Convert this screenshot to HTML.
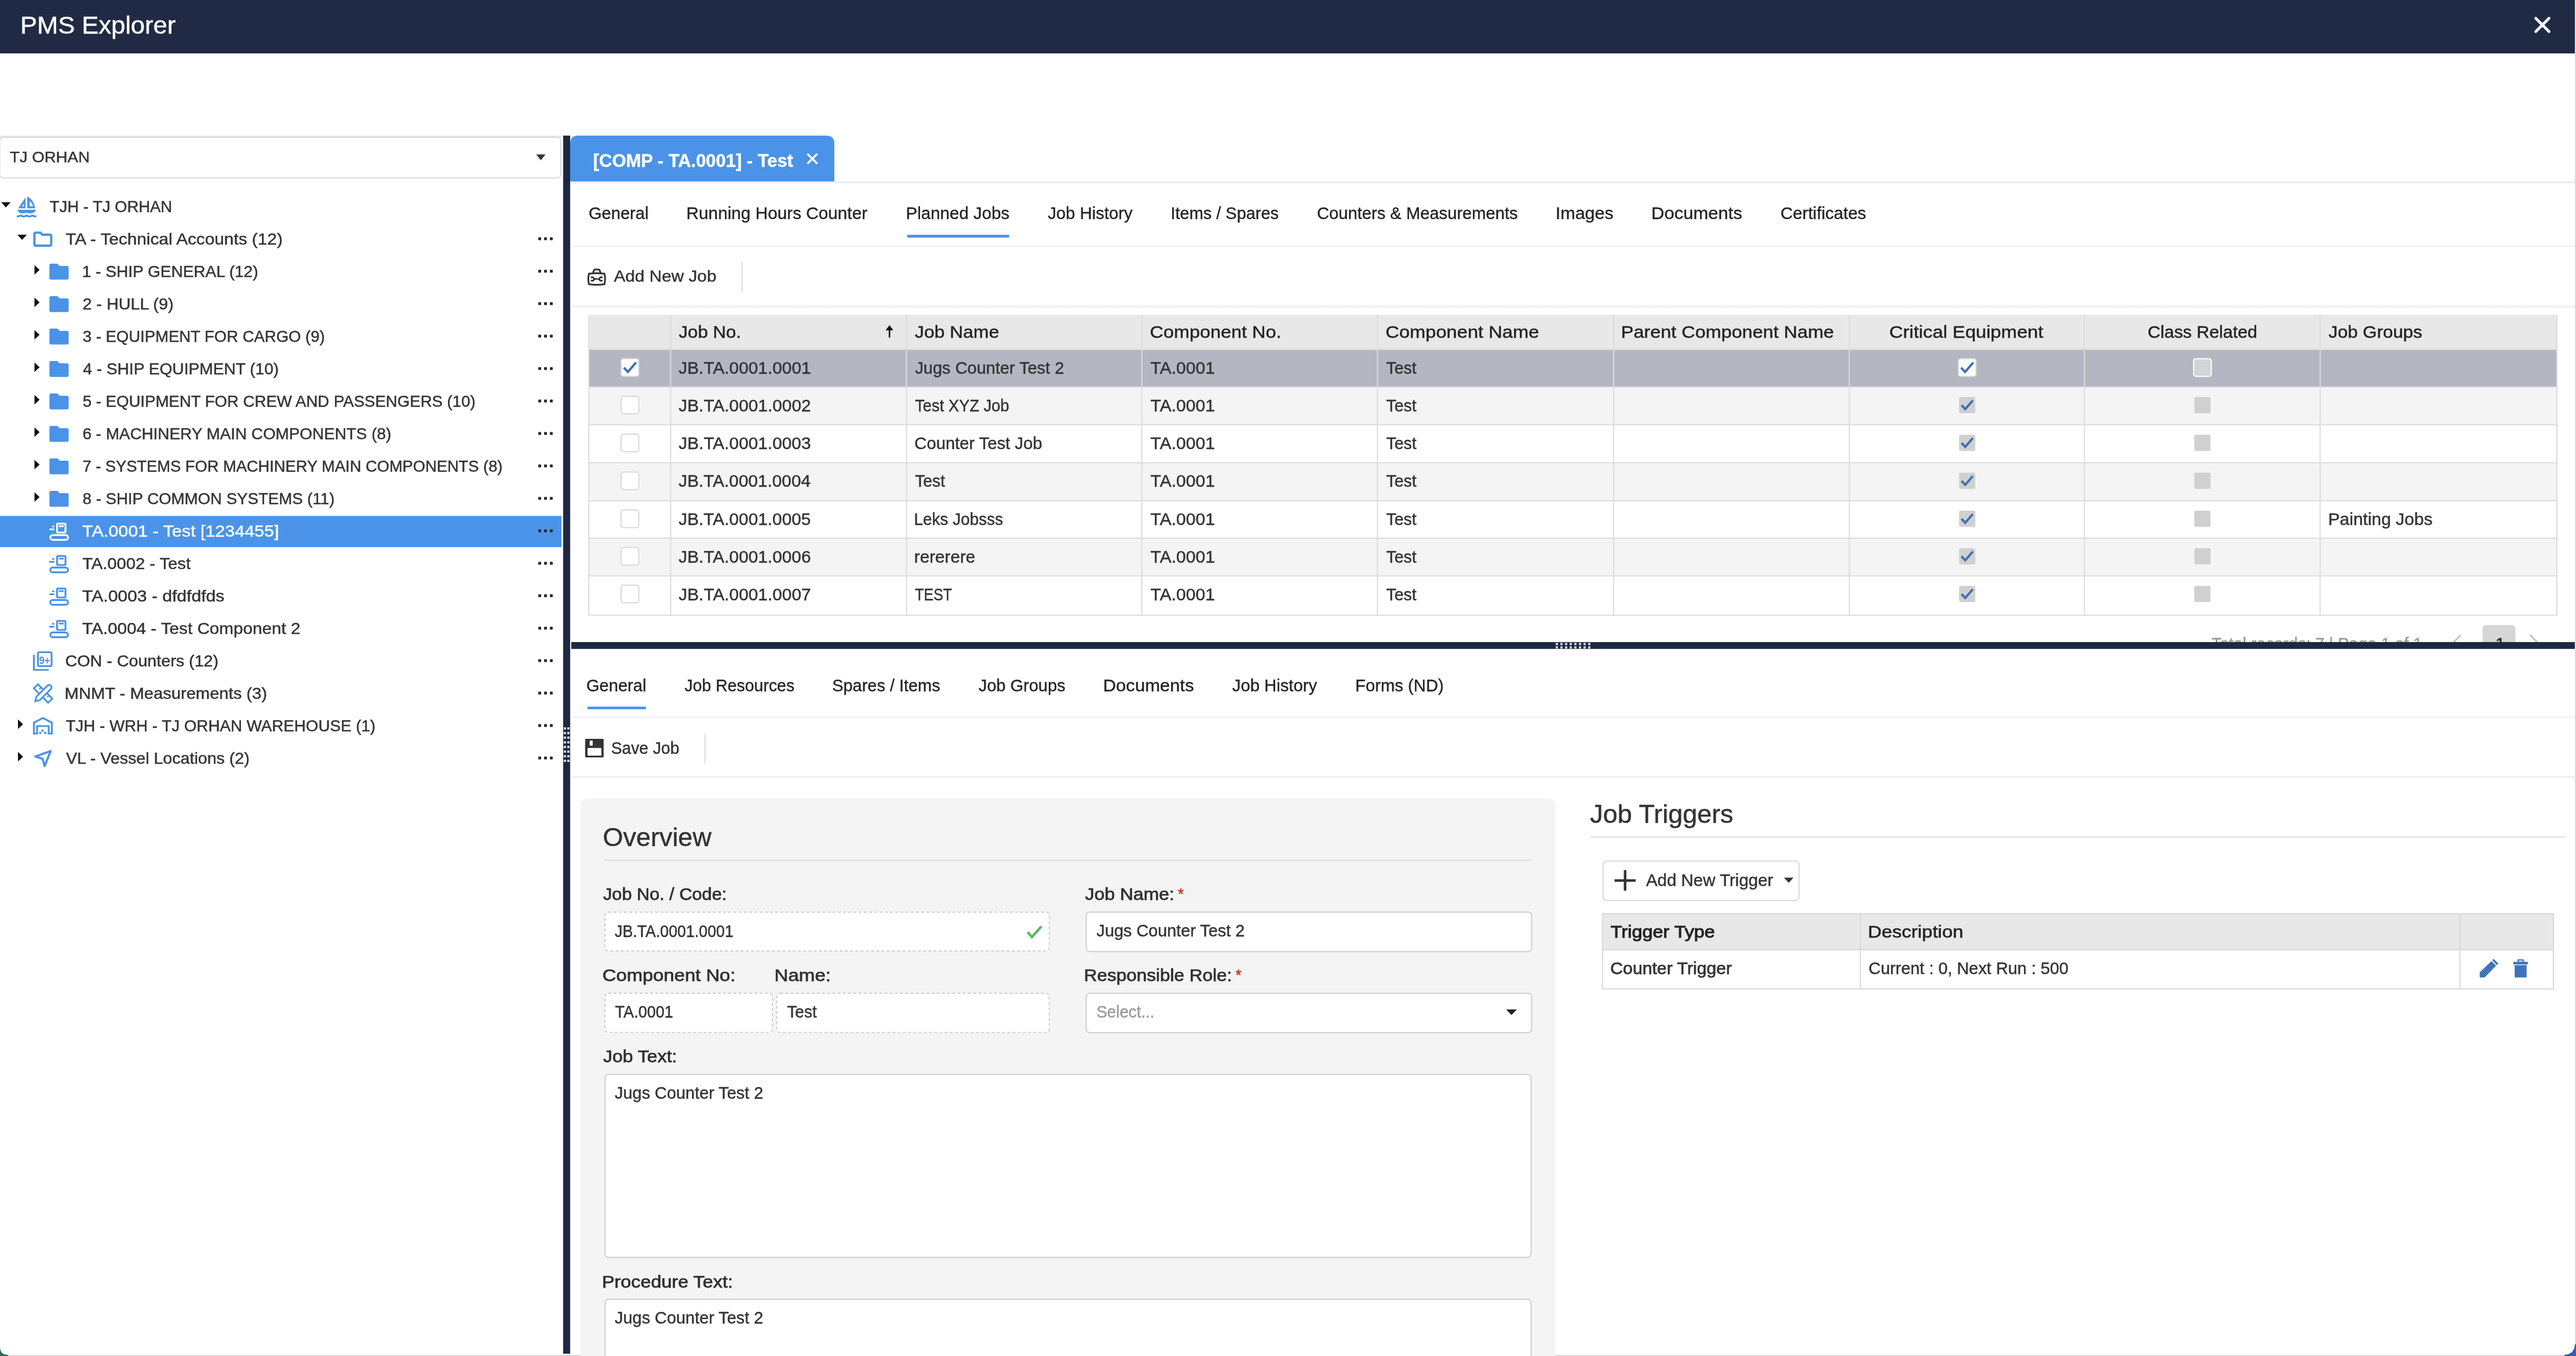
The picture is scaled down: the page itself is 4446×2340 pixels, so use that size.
<!DOCTYPE html>
<html><head><meta charset="utf-8"><title>PMS Explorer</title>
<style>
html,body{margin:0;padding:0;overflow:hidden;background:#ffffff;}
svg{display:block;will-change:transform;width:100%;height:auto;font-family:"Liberation Sans",sans-serif;}
</style></head><body>
<svg viewBox="0 0 4446 2340" preserveAspectRatio="xMinYMin meet">
<rect x="0.0" y="2300.0" width="60.0" height="40.0" fill="#2f6b4b"/>
<rect x="4386.0" y="2300.0" width="60.0" height="40.0" fill="#2d62ab"/>
<path d="M0,0 H4444 V2318 Q4444,2338 4424,2338 H14 Q0,2338 0,2324 Z" fill="#ffffff"/>
<rect x="14.0" y="2338.0" width="4412.0" height="2.0" fill="#dcdcdc"/>
<rect x="4444.0" y="0.0" width="2.0" height="2320.0" fill="#dcdcdc"/>
<rect x="0.0" y="0.0" width="4444.0" height="92.0" fill="#202a44"/>
<rect x="0.0" y="92.0" width="4444.0" height="2.0" fill="#e3e4e8"/>
<text y="58.2" font-size="43.02" fill="#ffffff" stroke="#ffffff" stroke-width="0.45" x="34.9" textLength="268.3" lengthAdjust="spacingAndGlyphs">PMS Explorer</text>
<g stroke="#ffffff" stroke-width="4.6" stroke-linecap="round">
<line x1="4376.5" y1="31.5" x2="4399.5" y2="54.5" stroke="#ffffff" stroke-width="4.6"/>
<line x1="4399.5" y1="31.5" x2="4376.5" y2="54.5" stroke="#ffffff" stroke-width="4.6"/>
</g>
<rect x="0.0" y="234.0" width="969.0" height="3.0" fill="#e6e6e6"/>
<rect x="-0.5" y="237.0" width="968.5" height="70.0" fill="#ffffff" rx="6" stroke="#dcdcdc" stroke-width="2.2"/>
<text y="280.2" font-size="26.45" fill="#333333" stroke="#333333" stroke-width="0.45" x="16.9" textLength="138.0" lengthAdjust="spacingAndGlyphs">TJ ORHAN</text>
<path d="M925.5,266.5 L941.5,266.5 L933.5,276.5 Z" fill="#333333"/>
<path d="M2,349.0 L18.3,349.0 L10.15,358.0 Z" fill="#111111"/>
<path d="M31.4,359.4 L44,340.8 V359.4 Z M37.8,356.1 L41.2,351.5 V356.1 Z" fill="#4a93e8" fill-rule="evenodd"/>
<path d="M47.1,359.4 V338.8 Q58.5,345.0 60.8,359.4 Z M51.3,356.1 V346.4 Q55.5,350.5 57.3,356.1 Z" fill="#4a93e8" fill-rule="evenodd"/>
<path d="M29.9,362.1 H62.2 Q61.2,365.5 57.7,367.0 Q51.75,369.6 45.8,367.0 Q39.7,369.6 33.6,367.0 Q30.9,365.5 29.9,362.1 Z" fill="#4a93e8"/>
<path d="M29.2,373.6 Q32.5,373.4 35.8,371.9 Q40.9,375.4 46,371.9 Q51,375.4 56,371.9 Q59.4,373.4 62.8,373.6" fill="none" stroke="#4a93e8" stroke-width="3.3"/>
<text y="366.0" font-size="27.03" fill="#333333" stroke="#333333" stroke-width="0.45" x="85.7" textLength="211.5" lengthAdjust="spacingAndGlyphs">TJH - TJ ORHAN</text>
<path d="M30,405.0 L46.3,405.0 L38.15,414.0 Z" fill="#111111"/>
<path d="M59.4,404.0 Q59.4,401.6 61.8,401.6 H70 L73,405.0 H86 Q88.4,405.0 88.4,407.4 V421.6 Q88.4,424.0 86,424.0 H61.8 Q59.4,424.0 59.4,421.6 Z" fill="none" stroke="#4a93e8" stroke-width="4.0"/>
<text y="422.0" font-size="27.03" fill="#333333" stroke="#333333" stroke-width="0.45" x="113.3" textLength="374.5" lengthAdjust="spacingAndGlyphs">TA - Technical Accounts (12)</text>
<rect x="929.0" y="409.6" width="5.0" height="4.8" fill="#2a2a2a" rx="1"/>
<rect x="939.0" y="409.6" width="5.0" height="4.8" fill="#2a2a2a" rx="1"/>
<rect x="949.0" y="409.6" width="5.0" height="4.8" fill="#2a2a2a" rx="1"/>
<path d="M59.5,457.5 L68.3,465.8 L59.5,474.0 Z" fill="#111111"/>
<path d="M85.3,458.0 Q85.3,455.0 88.3,455.0 H99 L103,459.0 H115.5 Q118.5,459.0 118.5,462.0 V479.5 Q118.5,482.5 115.5,482.5 H88.3 Q85.3,482.5 85.3,479.5 Z" fill="#4a93e8"/>
<text y="478.0" font-size="27.03" fill="#333333" stroke="#333333" stroke-width="0.45" x="141.7" textLength="303.8" lengthAdjust="spacingAndGlyphs">1 - SHIP GENERAL (12)</text>
<rect x="929.0" y="465.6" width="5.0" height="4.8" fill="#2a2a2a" rx="1"/>
<rect x="939.0" y="465.6" width="5.0" height="4.8" fill="#2a2a2a" rx="1"/>
<rect x="949.0" y="465.6" width="5.0" height="4.8" fill="#2a2a2a" rx="1"/>
<path d="M59.5,513.5 L68.3,521.8 L59.5,530.0 Z" fill="#111111"/>
<path d="M85.3,514.0 Q85.3,511.0 88.3,511.0 H99 L103,515.0 H115.5 Q118.5,515.0 118.5,518.0 V535.5 Q118.5,538.5 115.5,538.5 H88.3 Q85.3,538.5 85.3,535.5 Z" fill="#4a93e8"/>
<text y="534.0" font-size="27.03" fill="#333333" stroke="#333333" stroke-width="0.45" x="142.4" textLength="157.1" lengthAdjust="spacingAndGlyphs">2 - HULL (9)</text>
<rect x="929.0" y="521.6" width="5.0" height="4.8" fill="#2a2a2a" rx="1"/>
<rect x="939.0" y="521.6" width="5.0" height="4.8" fill="#2a2a2a" rx="1"/>
<rect x="949.0" y="521.6" width="5.0" height="4.8" fill="#2a2a2a" rx="1"/>
<path d="M59.5,569.5 L68.3,577.8 L59.5,586.0 Z" fill="#111111"/>
<path d="M85.3,570.0 Q85.3,567.0 88.3,567.0 H99 L103,571.0 H115.5 Q118.5,571.0 118.5,574.0 V591.5 Q118.5,594.5 115.5,594.5 H88.3 Q85.3,594.5 85.3,591.5 Z" fill="#4a93e8"/>
<text y="590.0" font-size="27.03" fill="#333333" stroke="#333333" stroke-width="0.45" x="142.8" textLength="417.9" lengthAdjust="spacingAndGlyphs">3 - EQUIPMENT FOR CARGO (9)</text>
<rect x="929.0" y="577.6" width="5.0" height="4.8" fill="#2a2a2a" rx="1"/>
<rect x="939.0" y="577.6" width="5.0" height="4.8" fill="#2a2a2a" rx="1"/>
<rect x="949.0" y="577.6" width="5.0" height="4.8" fill="#2a2a2a" rx="1"/>
<path d="M59.5,625.5 L68.3,633.8 L59.5,642.0 Z" fill="#111111"/>
<path d="M85.3,626.0 Q85.3,623.0 88.3,623.0 H99 L103,627.0 H115.5 Q118.5,627.0 118.5,630.0 V647.5 Q118.5,650.5 115.5,650.5 H88.3 Q85.3,650.5 85.3,647.5 Z" fill="#4a93e8"/>
<text y="646.0" font-size="27.03" fill="#333333" stroke="#333333" stroke-width="0.45" x="143.2" textLength="338.0" lengthAdjust="spacingAndGlyphs">4 - SHIP EQUIPMENT (10)</text>
<rect x="929.0" y="633.6" width="5.0" height="4.8" fill="#2a2a2a" rx="1"/>
<rect x="939.0" y="633.6" width="5.0" height="4.8" fill="#2a2a2a" rx="1"/>
<rect x="949.0" y="633.6" width="5.0" height="4.8" fill="#2a2a2a" rx="1"/>
<path d="M59.5,681.5 L68.3,689.8 L59.5,698.0 Z" fill="#111111"/>
<path d="M85.3,682.0 Q85.3,679.0 88.3,679.0 H99 L103,683.0 H115.5 Q118.5,683.0 118.5,686.0 V703.5 Q118.5,706.5 115.5,706.5 H88.3 Q85.3,706.5 85.3,703.5 Z" fill="#4a93e8"/>
<text y="702.0" font-size="27.03" fill="#333333" stroke="#333333" stroke-width="0.45" x="142.7" textLength="678.0" lengthAdjust="spacingAndGlyphs">5 - EQUIPMENT FOR CREW AND PASSENGERS (10)</text>
<rect x="929.0" y="689.6" width="5.0" height="4.8" fill="#2a2a2a" rx="1"/>
<rect x="939.0" y="689.6" width="5.0" height="4.8" fill="#2a2a2a" rx="1"/>
<rect x="949.0" y="689.6" width="5.0" height="4.8" fill="#2a2a2a" rx="1"/>
<path d="M59.5,737.5 L68.3,745.8 L59.5,754.0 Z" fill="#111111"/>
<path d="M85.3,738.0 Q85.3,735.0 88.3,735.0 H99 L103,739.0 H115.5 Q118.5,739.0 118.5,742.0 V759.5 Q118.5,762.5 115.5,762.5 H88.3 Q85.3,762.5 85.3,759.5 Z" fill="#4a93e8"/>
<text y="758.0" font-size="27.03" fill="#333333" stroke="#333333" stroke-width="0.45" x="142.4" textLength="532.8" lengthAdjust="spacingAndGlyphs">6 - MACHINERY MAIN COMPONENTS (8)</text>
<rect x="929.0" y="745.6" width="5.0" height="4.8" fill="#2a2a2a" rx="1"/>
<rect x="939.0" y="745.6" width="5.0" height="4.8" fill="#2a2a2a" rx="1"/>
<rect x="949.0" y="745.6" width="5.0" height="4.8" fill="#2a2a2a" rx="1"/>
<path d="M59.5,793.5 L68.3,801.8 L59.5,810.0 Z" fill="#111111"/>
<path d="M85.3,794.0 Q85.3,791.0 88.3,791.0 H99 L103,795.0 H115.5 Q118.5,795.0 118.5,798.0 V815.5 Q118.5,818.5 115.5,818.5 H88.3 Q85.3,818.5 85.3,815.5 Z" fill="#4a93e8"/>
<text y="814.0" font-size="27.03" fill="#333333" stroke="#333333" stroke-width="0.45" x="142.4" textLength="725.0" lengthAdjust="spacingAndGlyphs">7 - SYSTEMS FOR MACHINERY MAIN COMPONENTS (8)</text>
<rect x="929.0" y="801.6" width="5.0" height="4.8" fill="#2a2a2a" rx="1"/>
<rect x="939.0" y="801.6" width="5.0" height="4.8" fill="#2a2a2a" rx="1"/>
<rect x="949.0" y="801.6" width="5.0" height="4.8" fill="#2a2a2a" rx="1"/>
<path d="M59.5,849.5 L68.3,857.8 L59.5,866.0 Z" fill="#111111"/>
<path d="M85.3,850.0 Q85.3,847.0 88.3,847.0 H99 L103,851.0 H115.5 Q118.5,851.0 118.5,854.0 V871.5 Q118.5,874.5 115.5,874.5 H88.3 Q85.3,874.5 85.3,871.5 Z" fill="#4a93e8"/>
<text y="870.0" font-size="27.03" fill="#333333" stroke="#333333" stroke-width="0.45" x="142.6" textLength="434.8" lengthAdjust="spacingAndGlyphs">8 - SHIP COMMON SYSTEMS (11)</text>
<rect x="929.0" y="857.6" width="5.0" height="4.8" fill="#2a2a2a" rx="1"/>
<rect x="939.0" y="857.6" width="5.0" height="4.8" fill="#2a2a2a" rx="1"/>
<rect x="949.0" y="857.6" width="5.0" height="4.8" fill="#2a2a2a" rx="1"/>
<rect x="0.0" y="890.4" width="969.0" height="53.8" fill="#4a93e8"/>
<rect x="98.5" y="903.5" width="14.5" height="15.5" fill="none" rx="1.5" stroke="#ffffff" stroke-width="3.2"/>
<rect x="101.5" y="906.5" width="8.5" height="3.0" fill="#ffffff"/>
<rect x="90.0" y="907.0" width="3.5" height="3.0" fill="#ffffff"/>
<rect x="85.3" y="912.0" width="8.3" height="3.0" fill="#ffffff"/>
<rect x="86.8" y="923.3" width="30.6" height="8.3" fill="none" rx="4.15" stroke="#ffffff" stroke-width="3.2"/>
<text y="926.0" font-size="27.03" fill="#ffffff" stroke="#ffffff" stroke-width="0.45" x="142.1" textLength="339.4" lengthAdjust="spacingAndGlyphs">TA.0001 - Test [1234455]</text>
<rect x="929.0" y="913.6" width="5.0" height="4.8" fill="#2a2a2a" rx="1"/>
<rect x="939.0" y="913.6" width="5.0" height="4.8" fill="#2a2a2a" rx="1"/>
<rect x="949.0" y="913.6" width="5.0" height="4.8" fill="#2a2a2a" rx="1"/>
<rect x="98.5" y="959.5" width="14.5" height="15.5" fill="none" rx="1.5" stroke="#4a93e8" stroke-width="3.2"/>
<rect x="101.5" y="962.5" width="8.5" height="3.0" fill="#4a93e8"/>
<rect x="90.0" y="963.0" width="3.5" height="3.0" fill="#4a93e8"/>
<rect x="85.3" y="968.0" width="8.3" height="3.0" fill="#4a93e8"/>
<rect x="86.8" y="979.3" width="30.6" height="8.3" fill="none" rx="4.15" stroke="#4a93e8" stroke-width="3.2"/>
<text y="982.0" font-size="27.03" fill="#333333" stroke="#333333" stroke-width="0.45" x="142.2" textLength="186.8" lengthAdjust="spacingAndGlyphs">TA.0002 - Test</text>
<rect x="929.0" y="969.6" width="5.0" height="4.8" fill="#2a2a2a" rx="1"/>
<rect x="939.0" y="969.6" width="5.0" height="4.8" fill="#2a2a2a" rx="1"/>
<rect x="949.0" y="969.6" width="5.0" height="4.8" fill="#2a2a2a" rx="1"/>
<rect x="98.5" y="1015.5" width="14.5" height="15.5" fill="none" rx="1.5" stroke="#4a93e8" stroke-width="3.2"/>
<rect x="101.5" y="1018.5" width="8.5" height="3.0" fill="#4a93e8"/>
<rect x="90.0" y="1019.0" width="3.5" height="3.0" fill="#4a93e8"/>
<rect x="85.3" y="1024.0" width="8.3" height="3.0" fill="#4a93e8"/>
<rect x="86.8" y="1035.3" width="30.6" height="8.3" fill="none" rx="4.15" stroke="#4a93e8" stroke-width="3.2"/>
<text y="1038.0" font-size="27.03" fill="#333333" stroke="#333333" stroke-width="0.45" x="142.1" textLength="245.2" lengthAdjust="spacingAndGlyphs">TA.0003 - dfdfdfds</text>
<rect x="929.0" y="1025.6" width="5.0" height="4.8" fill="#2a2a2a" rx="1"/>
<rect x="939.0" y="1025.6" width="5.0" height="4.8" fill="#2a2a2a" rx="1"/>
<rect x="949.0" y="1025.6" width="5.0" height="4.8" fill="#2a2a2a" rx="1"/>
<rect x="98.5" y="1071.5" width="14.5" height="15.5" fill="none" rx="1.5" stroke="#4a93e8" stroke-width="3.2"/>
<rect x="101.5" y="1074.5" width="8.5" height="3.0" fill="#4a93e8"/>
<rect x="90.0" y="1075.0" width="3.5" height="3.0" fill="#4a93e8"/>
<rect x="85.3" y="1080.0" width="8.3" height="3.0" fill="#4a93e8"/>
<rect x="86.8" y="1091.3" width="30.6" height="8.3" fill="none" rx="4.15" stroke="#4a93e8" stroke-width="3.2"/>
<text y="1094.0" font-size="27.03" fill="#333333" stroke="#333333" stroke-width="0.45" x="142.1" textLength="376.3" lengthAdjust="spacingAndGlyphs">TA.0004 - Test Component 2</text>
<rect x="929.0" y="1081.6" width="5.0" height="4.8" fill="#2a2a2a" rx="1"/>
<rect x="939.0" y="1081.6" width="5.0" height="4.8" fill="#2a2a2a" rx="1"/>
<rect x="949.0" y="1081.6" width="5.0" height="4.8" fill="#2a2a2a" rx="1"/>
<path d="M58.5,1130.0 V1156.0 H84" fill="none" stroke="#4a93e8" stroke-width="3.2"/>
<rect x="65.5" y="1125.5" width="23.5" height="24.0" fill="none" rx="2.5" stroke="#4a93e8" stroke-width="3.2"/>
<text x="67.5" y="1145.5" font-size="17.5" font-weight="700" fill="#4a93e8" textLength="19" lengthAdjust="spacingAndGlyphs">9+</text>
<text y="1150.0" font-size="27.03" fill="#333333" stroke="#333333" stroke-width="0.45" x="112.5" textLength="264.6" lengthAdjust="spacingAndGlyphs">CON - Counters (12)</text>
<rect x="929.0" y="1137.6" width="5.0" height="4.8" fill="#2a2a2a" rx="1"/>
<rect x="939.0" y="1137.6" width="5.0" height="4.8" fill="#2a2a2a" rx="1"/>
<rect x="949.0" y="1137.6" width="5.0" height="4.8" fill="#2a2a2a" rx="1"/>
<g transform="translate(74.3,1196.7) rotate(45)">
<rect x="-17.5" y="-5.0" width="35.0" height="10.0" fill="none" stroke="#4a93e8" stroke-width="3.0"/>
<rect x="-11.0" y="-5.0" width="2.5" height="4.5" fill="#4a93e8"/>
<rect x="8.5" y="-5.0" width="2.5" height="4.5" fill="#4a93e8"/>
</g>
<g transform="translate(74.3,1196.7) rotate(-45)">
<path d="M-19,0 L-12,-4.2 H14 Q19,-4.2 19,0 Q19,4.2 14,4.2 H-12 Z" fill="#ffffff" stroke="#4a93e8" stroke-width="3.0"/>
</g>
<text y="1206.0" font-size="27.03" fill="#333333" stroke="#333333" stroke-width="0.45" x="111.6" textLength="349.4" lengthAdjust="spacingAndGlyphs">MNMT - Measurements (3)</text>
<rect x="929.0" y="1193.6" width="5.0" height="4.8" fill="#2a2a2a" rx="1"/>
<rect x="939.0" y="1193.6" width="5.0" height="4.8" fill="#2a2a2a" rx="1"/>
<rect x="949.0" y="1193.6" width="5.0" height="4.8" fill="#2a2a2a" rx="1"/>
<path d="M31,1241.5 L39.8,1249.8 L31,1258.0 Z" fill="#111111"/>
<path d="M58.5,1266.0 V1247.0 L74,1239.0 L89.5,1247.0 V1266.0 H84 V1253.0 H64 V1266.0 Z" fill="none" stroke="#4a93e8" stroke-width="3.2" stroke-linejoin="miter"/>
<rect x="71.5" y="1259.0" width="4.0" height="3.5" fill="#4a93e8"/>
<rect x="67.5" y="1263.0" width="4.0" height="3.5" fill="#4a93e8"/>
<rect x="76.0" y="1263.0" width="4.0" height="3.5" fill="#4a93e8"/>
<text y="1262.0" font-size="27.03" fill="#333333" stroke="#333333" stroke-width="0.45" x="113.4" textLength="534.7" lengthAdjust="spacingAndGlyphs">TJH - WRH - TJ ORHAN WAREHOUSE (1)</text>
<rect x="929.0" y="1249.6" width="5.0" height="4.8" fill="#2a2a2a" rx="1"/>
<rect x="939.0" y="1249.6" width="5.0" height="4.8" fill="#2a2a2a" rx="1"/>
<rect x="949.0" y="1249.6" width="5.0" height="4.8" fill="#2a2a2a" rx="1"/>
<path d="M31,1297.5 L39.8,1305.8 L31,1314.0 Z" fill="#111111"/>
<path d="M61,1305.5 L87.5,1296.0 L77,1322.0 L73.5,1309.5 Z" fill="none" stroke="#4a93e8" stroke-width="3.6" stroke-linejoin="round"/>
<text y="1318.0" font-size="27.03" fill="#333333" stroke="#333333" stroke-width="0.45" x="113.9" textLength="316.9" lengthAdjust="spacingAndGlyphs">VL - Vessel Locations (2)</text>
<rect x="929.0" y="1305.6" width="5.0" height="4.8" fill="#2a2a2a" rx="1"/>
<rect x="939.0" y="1305.6" width="5.0" height="4.8" fill="#2a2a2a" rx="1"/>
<rect x="949.0" y="1305.6" width="5.0" height="4.8" fill="#2a2a2a" rx="1"/>
<rect x="972.0" y="234.0" width="12.0" height="2102.0" fill="#1f2843"/>
<rect x="973.0" y="1255.0" width="4.0" height="4.0" fill="#ccd1dd"/>
<rect x="979.0" y="1255.0" width="4.0" height="4.0" fill="#ccd1dd"/>
<rect x="973.0" y="1263.0" width="4.0" height="4.0" fill="#ccd1dd"/>
<rect x="979.0" y="1263.0" width="4.0" height="4.0" fill="#ccd1dd"/>
<rect x="973.0" y="1271.0" width="4.0" height="4.0" fill="#ccd1dd"/>
<rect x="979.0" y="1271.0" width="4.0" height="4.0" fill="#ccd1dd"/>
<rect x="973.0" y="1279.0" width="4.0" height="4.0" fill="#ccd1dd"/>
<rect x="979.0" y="1279.0" width="4.0" height="4.0" fill="#ccd1dd"/>
<rect x="973.0" y="1287.0" width="4.0" height="4.0" fill="#ccd1dd"/>
<rect x="979.0" y="1287.0" width="4.0" height="4.0" fill="#ccd1dd"/>
<rect x="973.0" y="1295.0" width="4.0" height="4.0" fill="#ccd1dd"/>
<rect x="979.0" y="1295.0" width="4.0" height="4.0" fill="#ccd1dd"/>
<rect x="973.0" y="1303.0" width="4.0" height="4.0" fill="#ccd1dd"/>
<rect x="979.0" y="1303.0" width="4.0" height="4.0" fill="#ccd1dd"/>
<rect x="973.0" y="1311.0" width="4.0" height="4.0" fill="#ccd1dd"/>
<rect x="979.0" y="1311.0" width="4.0" height="4.0" fill="#ccd1dd"/>
<rect x="984.0" y="234.0" width="1.5" height="2102.0" fill="#eef0f0"/>
<path d="M984,313 V248 Q984,234 998,234 H1426 Q1440,234 1440,248 V313 Z" fill="#4a93e8"/>
<text y="287.6" font-size="32.27" fill="#ffffff" stroke="#ffffff" stroke-width="0.45" font-weight="700" x="1023.8" textLength="345.1" lengthAdjust="spacingAndGlyphs">[COMP - TA.0001] - Test</text>
<line x1="1393.5" y1="265.5" x2="1410.5" y2="282.5" stroke="#ffffff" stroke-width="3.4"/>
<line x1="1410.5" y1="265.5" x2="1393.5" y2="282.5" stroke="#ffffff" stroke-width="3.4"/>
<rect x="984.0" y="313.5" width="3460.0" height="2.0" fill="#e4e4e4"/>
<text y="378.4" font-size="29.36" fill="#222222" stroke="#222222" stroke-width="0.35" x="1016.0" textLength="103.4" lengthAdjust="spacingAndGlyphs">General</text>
<text y="378.4" font-size="29.36" fill="#222222" stroke="#222222" stroke-width="0.35" x="1184.6" textLength="312.5" lengthAdjust="spacingAndGlyphs">Running Hours Counter</text>
<text y="378.4" font-size="29.36" fill="#222222" stroke="#222222" stroke-width="0.35" x="1563.6" textLength="178.7" lengthAdjust="spacingAndGlyphs">Planned Jobs</text>
<text y="378.4" font-size="29.36" fill="#222222" stroke="#222222" stroke-width="0.35" x="1808.5" textLength="146.1" lengthAdjust="spacingAndGlyphs">Job History</text>
<text y="378.4" font-size="29.36" fill="#222222" stroke="#222222" stroke-width="0.35" x="2020.5" textLength="186.5" lengthAdjust="spacingAndGlyphs">Items / Spares</text>
<text y="378.4" font-size="29.36" fill="#222222" stroke="#222222" stroke-width="0.35" x="2273.0" textLength="346.7" lengthAdjust="spacingAndGlyphs">Counters &amp; Measurements</text>
<text y="378.4" font-size="29.36" fill="#222222" stroke="#222222" stroke-width="0.35" x="2684.7" textLength="100.2" lengthAdjust="spacingAndGlyphs">Images</text>
<text y="378.4" font-size="29.36" fill="#222222" stroke="#222222" stroke-width="0.35" x="2850.0" textLength="157.0" lengthAdjust="spacingAndGlyphs">Documents</text>
<text y="378.4" font-size="29.36" fill="#222222" stroke="#222222" stroke-width="0.35" x="3073.0" textLength="147.9" lengthAdjust="spacingAndGlyphs">Certificates</text>
<rect x="1565.6" y="405.2" width="176.1" height="4.8" fill="#4a93e8"/>
<defs><linearGradient id="sh" x1="0" y1="0" x2="0" y2="1"><stop offset="0" stop-color="#e9e9e9"/><stop offset="1" stop-color="#ffffff" stop-opacity="0"/></linearGradient><linearGradient id="sh2" x1="0" y1="0" x2="0" y2="1"><stop offset="0" stop-color="#f0f0f0"/><stop offset="1" stop-color="#ffffff" stop-opacity="0"/></linearGradient></defs>
<rect x="987.0" y="423.5" width="3457.0" height="5.0" fill="url(#sh)"/>
<rect x="987.0" y="527.5" width="3457.0" height="8.0" fill="url(#sh)"/>
<path d="M1016.6,472.2 Q1029.8,470.8 1043.1,472.2 Q1045.6,481.5 1043.1,490.6 Q1029.8,492.6 1016.6,490.6 Q1014.1,481.5 1016.6,472.2 Z" fill="none" stroke="#333333" stroke-width="3.0"/>
<path d="M1023.2,471.5 L1025.2,466.2 Q1025.7,465 1027.2,465 H1032.8 Q1034.3,465 1034.8,466.2 L1036.8,471.5" fill="none" stroke="#333333" stroke-width="3.0"/>
<rect x="1025.0" y="480.2" width="9.6" height="2.5" fill="#333333"/>
<path d="M1020.0,479.5 A3,3 0 1 1 1020.0,483.3" fill="none" stroke="#333333" stroke-width="2.9"/>
<path d="M1039.8,479.5 A3,3 0 1 0 1039.8,483.3" fill="none" stroke="#333333" stroke-width="2.9"/>
<text y="486.4" font-size="28.49" fill="#333333" stroke="#333333" stroke-width="0.45" x="1059.4" textLength="177.1" lengthAdjust="spacingAndGlyphs">Add New Job</text>
<rect x="1280.0" y="452.0" width="2.0" height="51.7" fill="#dddddd"/>
<rect x="1016.3" y="544.0" width="3396.7" height="59.0" fill="#e8e8e8"/>
<rect x="1016.3" y="603.0" width="3396.7" height="64.8" fill="#b4b7c2"/>
<rect x="1016.3" y="667.8" width="3396.7" height="65.2" fill="#f4f4f4"/>
<rect x="1016.3" y="733.0" width="3396.7" height="65.5" fill="#ffffff"/>
<rect x="1016.3" y="798.5" width="3396.7" height="65.5" fill="#f4f4f4"/>
<rect x="1016.3" y="864.0" width="3396.7" height="64.7" fill="#ffffff"/>
<rect x="1016.3" y="928.7" width="3396.7" height="65.0" fill="#f4f4f4"/>
<rect x="1016.3" y="993.7" width="3396.7" height="67.9" fill="#ffffff"/>
<rect x="1016.3" y="602.0" width="3397.7" height="2.0" fill="#dcdcdc"/>
<rect x="1016.3" y="666.8" width="3397.7" height="2.0" fill="#dcdcdc"/>
<rect x="1016.3" y="732.0" width="3397.7" height="2.0" fill="#dcdcdc"/>
<rect x="1016.3" y="797.5" width="3397.7" height="2.0" fill="#dcdcdc"/>
<rect x="1016.3" y="863.0" width="3397.7" height="2.0" fill="#dcdcdc"/>
<rect x="1016.3" y="927.7" width="3397.7" height="2.0" fill="#dcdcdc"/>
<rect x="1016.3" y="992.7" width="3397.7" height="2.0" fill="#dcdcdc"/>
<rect x="1016.3" y="1060.6" width="3397.7" height="2.0" fill="#dcdcdc"/>
<rect x="1016.3" y="543.5" width="3397.7" height="1.5" fill="#e4e4e4"/>
<rect x="1015.3" y="544.0" width="2.0" height="518.6" fill="#dcdcdc"/>
<rect x="1156.5" y="544.0" width="2.0" height="518.6" fill="#dcdcdc"/>
<rect x="1563.6" y="544.0" width="2.0" height="518.6" fill="#dcdcdc"/>
<rect x="1969.8" y="544.0" width="2.0" height="518.6" fill="#dcdcdc"/>
<rect x="2376.5" y="544.0" width="2.0" height="518.6" fill="#dcdcdc"/>
<rect x="2784.0" y="544.0" width="2.0" height="518.6" fill="#dcdcdc"/>
<rect x="3190.8" y="544.0" width="2.0" height="518.6" fill="#dcdcdc"/>
<rect x="3596.6" y="544.0" width="2.0" height="518.6" fill="#dcdcdc"/>
<rect x="4003.4" y="544.0" width="2.0" height="518.6" fill="#dcdcdc"/>
<rect x="4412.0" y="544.0" width="2.0" height="518.6" fill="#dcdcdc"/>
<text y="582.6" font-size="30.38" fill="#222222" stroke="#222222" stroke-width="0.45" x="1171.5" textLength="107.5" lengthAdjust="spacingAndGlyphs">Job No.</text>
<text y="582.6" font-size="30.38" fill="#222222" stroke="#222222" stroke-width="0.45" x="1579.0" textLength="145.4" lengthAdjust="spacingAndGlyphs">Job Name</text>
<text y="582.6" font-size="30.38" fill="#222222" stroke="#222222" stroke-width="0.45" x="1984.6" textLength="226.8" lengthAdjust="spacingAndGlyphs">Component No.</text>
<text y="582.6" font-size="30.38" fill="#222222" stroke="#222222" stroke-width="0.45" x="2391.3" textLength="265.1" lengthAdjust="spacingAndGlyphs">Component Name</text>
<text y="582.6" font-size="30.38" fill="#222222" stroke="#222222" stroke-width="0.45" x="2797.8" textLength="367.4" lengthAdjust="spacingAndGlyphs">Parent Component Name</text>
<text y="582.6" font-size="30.38" fill="#222222" stroke="#222222" stroke-width="0.45" x="3260.8" textLength="265.9" lengthAdjust="spacingAndGlyphs">Critical Equipment</text>
<text y="582.6" font-size="30.38" fill="#222222" stroke="#222222" stroke-width="0.45" x="3706.8" textLength="189.2" lengthAdjust="spacingAndGlyphs">Class Related</text>
<text y="582.6" font-size="30.38" fill="#222222" stroke="#222222" stroke-width="0.45" x="4019.0" textLength="161.6" lengthAdjust="spacingAndGlyphs">Job Groups</text>
<path d="M1535.2,582.6 V563" fill="none" stroke="#111111" stroke-width="2.6"/>
<path d="M1528.5,570 L1535.2,561 L1541.9,570 Z" fill="#111111"/>
<text y="644.9" font-size="29.65" fill="#333333" stroke="#333333" stroke-width="0.45" x="1171.3" textLength="228.3" lengthAdjust="spacingAndGlyphs">JB.TA.0001.0001</text>
<text y="644.9" font-size="29.65" fill="#333333" stroke="#333333" stroke-width="0.45" x="1579.4" textLength="257.1" lengthAdjust="spacingAndGlyphs">Jugs Counter Test 2</text>
<text y="644.9" font-size="29.65" fill="#333333" stroke="#333333" stroke-width="0.45" x="1985.5" textLength="111.5" lengthAdjust="spacingAndGlyphs">TA.0001</text>
<text y="644.9" font-size="29.65" fill="#333333" stroke="#333333" stroke-width="0.45" x="2392.4" textLength="52.4" lengthAdjust="spacingAndGlyphs">Test</text>
<rect x="1072.0" y="619.0" width="30.5" height="30.5" fill="#ffffff" rx="4" stroke="#d9d9d9" stroke-width="2"/>
<path d="M1076.8,634.4 L1083.7,641.8 L1097.8,625.4" fill="none" stroke="#3d6fb3" stroke-width="3.9" stroke-linecap="butt" stroke-linejoin="miter"/>
<rect x="3380.0" y="619.0" width="30.5" height="30.5" fill="#ffffff" rx="4" stroke="#d9d9d9" stroke-width="2"/>
<path d="M3384.7,634.4 L3391.6,641.8 L3405.7,625.4" fill="none" stroke="#3d6fb3" stroke-width="3.9" stroke-linecap="butt" stroke-linejoin="miter"/>
<rect x="3786.0" y="619.0" width="30.5" height="30.5" fill="#d4d4d4" rx="4" stroke="#ffffff" stroke-width="2"/>
<text y="709.7" font-size="29.65" fill="#333333" stroke="#333333" stroke-width="0.45" x="1171.3" textLength="228.3" lengthAdjust="spacingAndGlyphs">JB.TA.0001.0002</text>
<text y="709.7" font-size="29.65" fill="#333333" stroke="#333333" stroke-width="0.45" x="1579.2" textLength="162.6" lengthAdjust="spacingAndGlyphs">Test XYZ Job</text>
<text y="709.7" font-size="29.65" fill="#333333" stroke="#333333" stroke-width="0.45" x="1985.5" textLength="111.5" lengthAdjust="spacingAndGlyphs">TA.0001</text>
<text y="709.7" font-size="29.65" fill="#333333" stroke="#333333" stroke-width="0.45" x="2392.4" textLength="52.4" lengthAdjust="spacingAndGlyphs">Test</text>
<rect x="1072.0" y="683.8" width="30.5" height="30.5" fill="#ffffff" rx="4" stroke="#d9d9d9" stroke-width="2"/>
<rect x="3381.2" y="685.0" width="28.0" height="28.0" fill="#d0d0d0" rx="3"/>
<path d="M3385.5,699.2 L3391.9,706.0 L3404.9,690.9" fill="none" stroke="#3d6fb3" stroke-width="3.9" stroke-linecap="butt" stroke-linejoin="miter"/>
<rect x="3787.2" y="685.0" width="28.0" height="28.0" fill="#d0d0d0" rx="3"/>
<text y="774.9" font-size="29.65" fill="#333333" stroke="#333333" stroke-width="0.45" x="1171.3" textLength="228.2" lengthAdjust="spacingAndGlyphs">JB.TA.0001.0003</text>
<text y="774.9" font-size="29.65" fill="#333333" stroke="#333333" stroke-width="0.45" x="1578.3" textLength="220.4" lengthAdjust="spacingAndGlyphs">Counter Test Job</text>
<text y="774.9" font-size="29.65" fill="#333333" stroke="#333333" stroke-width="0.45" x="1985.5" textLength="111.5" lengthAdjust="spacingAndGlyphs">TA.0001</text>
<text y="774.9" font-size="29.65" fill="#333333" stroke="#333333" stroke-width="0.45" x="2392.4" textLength="52.4" lengthAdjust="spacingAndGlyphs">Test</text>
<rect x="1072.0" y="749.0" width="30.5" height="30.5" fill="#ffffff" rx="4" stroke="#d9d9d9" stroke-width="2"/>
<rect x="3381.2" y="750.2" width="28.0" height="28.0" fill="#d0d0d0" rx="3"/>
<path d="M3385.5,764.4 L3391.9,771.2 L3404.9,756.1" fill="none" stroke="#3d6fb3" stroke-width="3.9" stroke-linecap="butt" stroke-linejoin="miter"/>
<rect x="3787.2" y="750.2" width="28.0" height="28.0" fill="#d0d0d0" rx="3"/>
<text y="840.4" font-size="29.65" fill="#333333" stroke="#333333" stroke-width="0.45" x="1171.3" textLength="227.7" lengthAdjust="spacingAndGlyphs">JB.TA.0001.0004</text>
<text y="840.4" font-size="29.65" fill="#333333" stroke="#333333" stroke-width="0.45" x="1579.2" textLength="52.0" lengthAdjust="spacingAndGlyphs">Test</text>
<text y="840.4" font-size="29.65" fill="#333333" stroke="#333333" stroke-width="0.45" x="1985.5" textLength="111.5" lengthAdjust="spacingAndGlyphs">TA.0001</text>
<text y="840.4" font-size="29.65" fill="#333333" stroke="#333333" stroke-width="0.45" x="2392.4" textLength="52.4" lengthAdjust="spacingAndGlyphs">Test</text>
<rect x="1072.0" y="814.5" width="30.5" height="30.5" fill="#ffffff" rx="4" stroke="#d9d9d9" stroke-width="2"/>
<rect x="3381.2" y="815.7" width="28.0" height="28.0" fill="#d0d0d0" rx="3"/>
<path d="M3385.5,829.9 L3391.9,836.7 L3404.9,821.6" fill="none" stroke="#3d6fb3" stroke-width="3.9" stroke-linecap="butt" stroke-linejoin="miter"/>
<rect x="3787.2" y="815.7" width="28.0" height="28.0" fill="#d0d0d0" rx="3"/>
<text y="905.9" font-size="29.65" fill="#333333" stroke="#333333" stroke-width="0.45" x="1171.3" textLength="228.1" lengthAdjust="spacingAndGlyphs">JB.TA.0001.0005</text>
<text y="905.9" font-size="29.65" fill="#333333" stroke="#333333" stroke-width="0.45" x="1577.5" textLength="153.7" lengthAdjust="spacingAndGlyphs">Leks Jobsss</text>
<text y="905.9" font-size="29.65" fill="#333333" stroke="#333333" stroke-width="0.45" x="1985.5" textLength="111.5" lengthAdjust="spacingAndGlyphs">TA.0001</text>
<text y="905.9" font-size="29.65" fill="#333333" stroke="#333333" stroke-width="0.45" x="2392.4" textLength="52.4" lengthAdjust="spacingAndGlyphs">Test</text>
<text y="905.9" font-size="29.65" fill="#333333" stroke="#333333" stroke-width="0.45" x="4018.3" textLength="180.1" lengthAdjust="spacingAndGlyphs">Painting Jobs</text>
<rect x="1072.0" y="880.0" width="30.5" height="30.5" fill="#ffffff" rx="4" stroke="#d9d9d9" stroke-width="2"/>
<rect x="3381.2" y="881.2" width="28.0" height="28.0" fill="#d0d0d0" rx="3"/>
<path d="M3385.5,895.4 L3391.9,902.2 L3404.9,887.1" fill="none" stroke="#3d6fb3" stroke-width="3.9" stroke-linecap="butt" stroke-linejoin="miter"/>
<rect x="3787.2" y="881.2" width="28.0" height="28.0" fill="#d0d0d0" rx="3"/>
<text y="970.6" font-size="29.65" fill="#333333" stroke="#333333" stroke-width="0.45" x="1171.3" textLength="228.2" lengthAdjust="spacingAndGlyphs">JB.TA.0001.0006</text>
<text y="970.6" font-size="29.65" fill="#333333" stroke="#333333" stroke-width="0.45" x="1577.8" textLength="105.5" lengthAdjust="spacingAndGlyphs">rererere</text>
<text y="970.6" font-size="29.65" fill="#333333" stroke="#333333" stroke-width="0.45" x="1985.5" textLength="111.5" lengthAdjust="spacingAndGlyphs">TA.0001</text>
<text y="970.6" font-size="29.65" fill="#333333" stroke="#333333" stroke-width="0.45" x="2392.4" textLength="52.4" lengthAdjust="spacingAndGlyphs">Test</text>
<rect x="1072.0" y="944.7" width="30.5" height="30.5" fill="#ffffff" rx="4" stroke="#d9d9d9" stroke-width="2"/>
<rect x="3381.2" y="945.9" width="28.0" height="28.0" fill="#d0d0d0" rx="3"/>
<path d="M3385.5,960.1 L3391.9,966.9 L3404.9,951.8" fill="none" stroke="#3d6fb3" stroke-width="3.9" stroke-linecap="butt" stroke-linejoin="miter"/>
<rect x="3787.2" y="945.9" width="28.0" height="28.0" fill="#d0d0d0" rx="3"/>
<text y="1035.6" font-size="29.65" fill="#333333" stroke="#333333" stroke-width="0.45" x="1171.3" textLength="228.3" lengthAdjust="spacingAndGlyphs">JB.TA.0001.0007</text>
<text y="1035.6" font-size="29.65" fill="#333333" stroke="#333333" stroke-width="0.45" x="1579.2" textLength="63.9" lengthAdjust="spacingAndGlyphs">TEST</text>
<text y="1035.6" font-size="29.65" fill="#333333" stroke="#333333" stroke-width="0.45" x="1985.5" textLength="111.5" lengthAdjust="spacingAndGlyphs">TA.0001</text>
<text y="1035.6" font-size="29.65" fill="#333333" stroke="#333333" stroke-width="0.45" x="2392.4" textLength="52.4" lengthAdjust="spacingAndGlyphs">Test</text>
<rect x="1072.0" y="1009.7" width="30.5" height="30.5" fill="#ffffff" rx="4" stroke="#d9d9d9" stroke-width="2"/>
<rect x="3381.2" y="1010.9" width="28.0" height="28.0" fill="#d0d0d0" rx="3"/>
<path d="M3385.5,1025.1 L3391.9,1031.9 L3404.9,1016.8" fill="none" stroke="#3d6fb3" stroke-width="3.9" stroke-linecap="butt" stroke-linejoin="miter"/>
<rect x="3787.2" y="1010.9" width="28.0" height="28.0" fill="#d0d0d0" rx="3"/>
<text y="1120.5" font-size="29.65" fill="#9a9a9a" stroke="#9a9a9a" stroke-width="0.45" x="3816.9" textLength="364.1" lengthAdjust="spacingAndGlyphs">Total records: 7 | Page 1 of 1</text>
<path d="M4247,1096 L4233,1110" fill="none" stroke="#c8c8c8" stroke-width="3.2"/>
<path d="M4367,1096 L4381,1110" fill="none" stroke="#c8c8c8" stroke-width="3.2"/>
<rect x="4284.7" y="1078.8" width="56.8" height="50.0" fill="#d6d6d6" rx="6"/>
<text y="1121.0" font-size="29.65" fill="#222222" stroke="#222222" stroke-width="0.45" x="4307.0">1</text>
<rect x="986.0" y="1119.0" width="3458.0" height="40.0" fill="#ffffff"/>
<rect x="986.0" y="1108.0" width="3458.0" height="11.8" fill="#1f2843"/>
<rect x="2685.0" y="1109.3" width="4.0" height="4.0" fill="#ccd1dd"/>
<rect x="2693.0" y="1109.3" width="4.0" height="4.0" fill="#ccd1dd"/>
<rect x="2701.0" y="1109.3" width="4.0" height="4.0" fill="#ccd1dd"/>
<rect x="2709.0" y="1109.3" width="4.0" height="4.0" fill="#ccd1dd"/>
<rect x="2717.0" y="1109.3" width="4.0" height="4.0" fill="#ccd1dd"/>
<rect x="2725.0" y="1109.3" width="4.0" height="4.0" fill="#ccd1dd"/>
<rect x="2733.0" y="1109.3" width="4.0" height="4.0" fill="#ccd1dd"/>
<rect x="2741.0" y="1109.3" width="4.0" height="4.0" fill="#ccd1dd"/>
<rect x="2685.0" y="1115.3" width="4.0" height="4.0" fill="#ccd1dd"/>
<rect x="2693.0" y="1115.3" width="4.0" height="4.0" fill="#ccd1dd"/>
<rect x="2701.0" y="1115.3" width="4.0" height="4.0" fill="#ccd1dd"/>
<rect x="2709.0" y="1115.3" width="4.0" height="4.0" fill="#ccd1dd"/>
<rect x="2717.0" y="1115.3" width="4.0" height="4.0" fill="#ccd1dd"/>
<rect x="2725.0" y="1115.3" width="4.0" height="4.0" fill="#ccd1dd"/>
<rect x="2733.0" y="1115.3" width="4.0" height="4.0" fill="#ccd1dd"/>
<rect x="2741.0" y="1115.3" width="4.0" height="4.0" fill="#ccd1dd"/>
<text y="1192.8" font-size="29.94" fill="#222222" stroke="#222222" stroke-width="0.35" x="1012.0" textLength="103.4" lengthAdjust="spacingAndGlyphs">General</text>
<text y="1192.8" font-size="29.94" fill="#222222" stroke="#222222" stroke-width="0.35" x="1181.6" textLength="189.5" lengthAdjust="spacingAndGlyphs">Job Resources</text>
<text y="1192.8" font-size="29.94" fill="#222222" stroke="#222222" stroke-width="0.35" x="1436.2" textLength="186.5" lengthAdjust="spacingAndGlyphs">Spares / Items</text>
<text y="1192.8" font-size="29.94" fill="#222222" stroke="#222222" stroke-width="0.35" x="1689.0" textLength="149.8" lengthAdjust="spacingAndGlyphs">Job Groups</text>
<text y="1192.8" font-size="29.94" fill="#222222" stroke="#222222" stroke-width="0.35" x="1903.7" textLength="157.0" lengthAdjust="spacingAndGlyphs">Documents</text>
<text y="1192.8" font-size="29.94" fill="#222222" stroke="#222222" stroke-width="0.35" x="2126.8" textLength="146.2" lengthAdjust="spacingAndGlyphs">Job History</text>
<text y="1192.8" font-size="29.94" fill="#222222" stroke="#222222" stroke-width="0.35" x="2339.1" textLength="152.7" lengthAdjust="spacingAndGlyphs">Forms (ND)</text>
<rect x="1014.0" y="1219.4" width="100.8" height="4.5" fill="#4a93e8"/>
<rect x="987.0" y="1236.5" width="3457.0" height="5.0" fill="url(#sh)"/>
<rect x="1010.0" y="1275.0" width="31.8" height="31.9" fill="#333333" rx="1"/>
<rect x="1017.7" y="1278.0" width="5.3" height="8.8" fill="#ffffff" rx="1"/>
<rect x="1014.0" y="1290.8" width="24.0" height="13.2" fill="#ffffff" rx="1"/>
<text y="1301.2" font-size="30.23" fill="#333333" stroke="#333333" stroke-width="0.45" x="1054.7" textLength="117.8" lengthAdjust="spacingAndGlyphs">Save Job</text>
<rect x="1215.6" y="1266.0" width="2.0" height="51.5" fill="#dddddd"/>
<rect x="987.0" y="1339.0" width="3457.0" height="8.0" fill="url(#sh)"/>
<rect x="1002.0" y="1377.7" width="1682.5" height="1000.0" fill="#f4f4f4" rx="11"/>
<text y="1460.2" font-size="43.90" fill="#333333" stroke="#333333" stroke-width="0.45" x="1040.4" textLength="187.5" lengthAdjust="spacingAndGlyphs">Overview</text>
<rect x="1042.0" y="1483.7" width="1602.5" height="2.0" fill="#dcdcdc"/>
<text y="1553.3" font-size="30.23" fill="#2f2f2f" stroke="#2f2f2f" stroke-width="0.75" x="1041.0" textLength="213.3" lengthAdjust="spacingAndGlyphs">Job No. / Code:</text>
<text y="1553.3" font-size="30.23" fill="#2f2f2f" stroke="#2f2f2f" stroke-width="0.75" x="1872.8" textLength="154.1" lengthAdjust="spacingAndGlyphs">Job Name:</text>
<text x="2032.7" y="1551.8" font-size="27" fill="#c0392b" stroke="#c0392b" stroke-width="0.5">*</text>
<text y="1693.3" font-size="30.23" fill="#2f2f2f" stroke="#2f2f2f" stroke-width="0.75" x="1039.8" textLength="229.6" lengthAdjust="spacingAndGlyphs">Component No:</text>
<text y="1693.3" font-size="30.23" fill="#2f2f2f" stroke="#2f2f2f" stroke-width="0.75" x="1336.5" textLength="97.5" lengthAdjust="spacingAndGlyphs">Name:</text>
<text y="1693.3" font-size="30.23" fill="#2f2f2f" stroke="#2f2f2f" stroke-width="0.75" x="1870.7" textLength="255.6" lengthAdjust="spacingAndGlyphs">Responsible Role:</text>
<text x="2132.2" y="1691.8" font-size="27" fill="#c0392b" stroke="#c0392b" stroke-width="0.5">*</text>
<text y="1833.0" font-size="30.23" fill="#2f2f2f" stroke="#2f2f2f" stroke-width="0.75" x="1041.0" textLength="127.4" lengthAdjust="spacingAndGlyphs">Job Text:</text>
<text y="2222.0" font-size="30.23" fill="#2f2f2f" stroke="#2f2f2f" stroke-width="0.75" x="1038.9" textLength="226.0" lengthAdjust="spacingAndGlyphs">Procedure Text:</text>
<rect x="1044.0" y="1574.0" width="767.0" height="67.0" fill="#ffffff" rx="6" stroke="#cfcfcf" stroke-width="2" stroke-dasharray="5 4"/>
<text y="1616.8" font-size="29.36" fill="#333333" stroke="#333333" stroke-width="0.45" x="1061.1" textLength="204.7" lengthAdjust="spacingAndGlyphs">JB.TA.0001.0001</text>
<path d="M1773.5,1608.5 L1781,1617 L1797.5,1598.5" fill="none" stroke="#5cb85c" stroke-width="4.2"/>
<rect x="1874.8" y="1573.8" width="768.7" height="68.4" fill="#ffffff" rx="6" stroke="#d2d2d2" stroke-width="2.2"/>
<text y="1616.3" font-size="29.36" fill="#333333" stroke="#333333" stroke-width="0.45" x="1892.6" textLength="255.6" lengthAdjust="spacingAndGlyphs">Jugs Counter Test 2</text>
<rect x="1044.0" y="1714.0" width="289.0" height="67.7" fill="#ffffff" rx="6" stroke="#cfcfcf" stroke-width="2" stroke-dasharray="5 4"/>
<text y="1756.2" font-size="29.36" fill="#333333" stroke="#333333" stroke-width="0.45" x="1061.6" textLength="100.3" lengthAdjust="spacingAndGlyphs">TA.0001</text>
<rect x="1340.7" y="1714.0" width="470.3" height="67.7" fill="#ffffff" rx="6" stroke="#cfcfcf" stroke-width="2" stroke-dasharray="5 4"/>
<text y="1756.2" font-size="29.36" fill="#333333" stroke="#333333" stroke-width="0.45" x="1358.4" textLength="51.3" lengthAdjust="spacingAndGlyphs">Test</text>
<rect x="1874.8" y="1714.0" width="768.7" height="68.0" fill="#ffffff" rx="6" stroke="#d2d2d2" stroke-width="2.2"/>
<text y="1755.8" font-size="29.36" fill="#9b9b9b" stroke="#9b9b9b" stroke-width="0.45" x="1892.4" textLength="100.1" lengthAdjust="spacingAndGlyphs">Select...</text>
<path d="M2599.5,1742 L2618,1742 L2608.75,1751.6 Z" fill="#222222"/>
<rect x="1044.3" y="1854.0" width="1598.2" height="315.8" fill="#ffffff" rx="6" stroke="#d2d2d2" stroke-width="2.2"/>
<text y="1896.2" font-size="29.36" fill="#333333" stroke="#333333" stroke-width="0.45" x="1061.1" textLength="256.3" lengthAdjust="spacingAndGlyphs">Jugs Counter Test 2</text>
<rect x="1044.3" y="2242.2" width="1598.2" height="256.8" fill="#ffffff" rx="6" stroke="#d2d2d2" stroke-width="2.2"/>
<text y="2284.0" font-size="29.36" fill="#333333" stroke="#333333" stroke-width="0.45" x="1061.1" textLength="256.3" lengthAdjust="spacingAndGlyphs">Jugs Counter Test 2</text>
<defs><linearGradient id="fade" x1="0" y1="0" x2="0" y2="1"><stop offset="0" stop-color="#ffffff" stop-opacity="0"/><stop offset="1" stop-color="#ffffff" stop-opacity="0.55"/></linearGradient></defs>
<text y="1420.2" font-size="43.90" fill="#333333" stroke="#333333" stroke-width="0.45" x="2744.3" textLength="247.3" lengthAdjust="spacingAndGlyphs">Job Triggers</text>
<rect x="2745.4" y="1443.6" width="1682.2" height="2.0" fill="#dcdcdc"/>
<rect x="2766.7" y="1485.7" width="338.3" height="68.3" fill="#ffffff" rx="7" stroke="#dadada" stroke-width="2"/>
<rect x="2786.6" y="1517.3" width="36.4" height="4.4" fill="#333333"/>
<rect x="2802.6" y="1501.5" width="4.4" height="35.5" fill="#333333"/>
<text y="1528.8" font-size="29.36" fill="#333333" stroke="#333333" stroke-width="0.45" x="2840.9" textLength="219.5" lengthAdjust="spacingAndGlyphs">Add New Trigger</text>
<path d="M3079,1514.4 L3095.5,1514.4 L3087.25,1523.5 Z" fill="#333333"/>
<rect x="2765.7" y="1576.7" width="1641.3" height="62.3" fill="#e8e8e8"/>
<rect x="2764.7" y="1575.7" width="1643.3" height="2.0" fill="#d9d9d9"/>
<rect x="2764.7" y="1638.0" width="1643.3" height="2.0" fill="#d9d9d9"/>
<rect x="2764.7" y="1705.5" width="1643.3" height="2.0" fill="#d9d9d9"/>
<rect x="2764.7" y="1576.7" width="2.0" height="129.8" fill="#d9d9d9"/>
<rect x="3209.8" y="1576.7" width="2.0" height="129.8" fill="#d9d9d9"/>
<rect x="4244.6" y="1576.7" width="2.0" height="129.8" fill="#d9d9d9"/>
<rect x="4406.0" y="1576.7" width="2.0" height="129.8" fill="#d9d9d9"/>
<text y="1617.9" font-size="29.65" fill="#222222" stroke="#222222" stroke-width="1.0" x="2779.8" textLength="180.1" lengthAdjust="spacingAndGlyphs">Trigger Type</text>
<text y="1617.9" font-size="29.65" fill="#222222" stroke="#222222" stroke-width="0.55" x="3223.7" textLength="164.9" lengthAdjust="spacingAndGlyphs">Description</text>
<text y="1680.5" font-size="29.36" fill="#333333" stroke="#333333" stroke-width="0.75" x="2779.3" textLength="209.8" lengthAdjust="spacingAndGlyphs">Counter Trigger</text>
<text y="1680.5" font-size="29.36" fill="#333333" stroke="#333333" stroke-width="0.45" x="3225.1" textLength="345.0" lengthAdjust="spacingAndGlyphs">Current : 0, Next Run : 500</text>
<path d="M4279.8,1678.0 L4300.1,1658.6 L4308.0,1666.5 L4288.4,1686.8 H4280.8 Q4279.8,1686.8 4279.8,1685.8 Z" fill="#3f74b8"/>
<path d="M4301.5,1657 L4303.0,1655.2 Q4303.6,1654.6 4304.2,1655.2 L4311.4,1662.3 Q4312,1662.9 4311.4,1663.5 L4309.4,1665.4 Z" fill="#3f74b8"/>
<rect x="4337.8" y="1659.8" width="25.1" height="4.4" fill="#3f74b8" rx="0.8"/>
<rect x="4346.2" y="1656.6" width="8.6" height="4.2" fill="none" stroke="#3f74b8" stroke-width="2.2"/>
<path d="M4340.1,1665.4 H4360.8 V1685.8 Q4360.8,1686.8 4359.8,1686.8 H4341.1 Q4340.1,1686.8 4340.1,1685.8 Z" fill="#3f74b8"/>
</svg>
</body></html>
